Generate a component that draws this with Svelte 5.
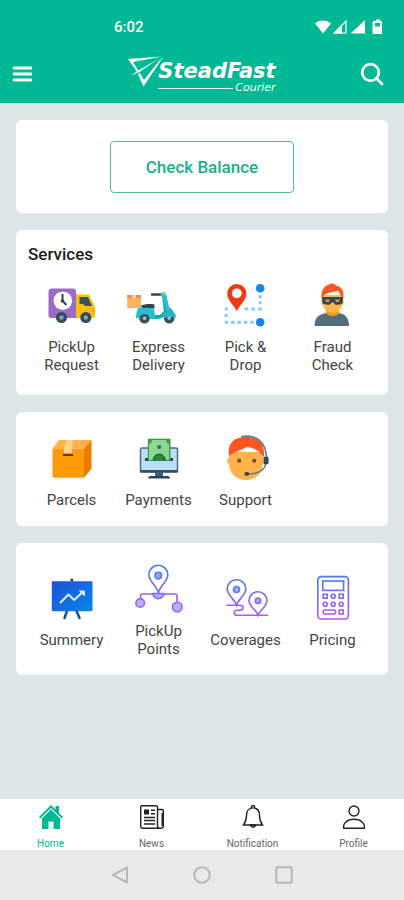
<script lang="ts">
  interface Tile {
    icon: string
    label: string
  }

  interface Group {
    title?: string
    tiles: Tile[]
  }

  const groups: Group[] = [
    {
      title: 'Services',
      tiles: [
        { icon: 'truck', label: 'PickUp Request' },
        { icon: 'scooter', label: 'Express Delivery' },
        { icon: 'route', label: 'Pick & Drop' },
        { icon: 'fraud', label: 'Fraud Check' },
      ],
    },
    {
      tiles: [
        { icon: 'parcel', label: 'Parcels' },
        { icon: 'payment', label: 'Payments' },
        { icon: 'support', label: 'Support' },
      ],
    },
    {
      tiles: [
        { icon: 'summary', label: 'Summery' },
        { icon: 'points', label: 'PickUp Points' },
        { icon: 'coverage', label: 'Coverages' },
        { icon: 'pricing', label: 'Pricing' },
      ],
    },
  ]

  const tabs = [
    { id: 'home', label: 'Home' },
    { id: 'news', label: 'News' },
    { id: 'notification', label: 'Notification' },
    { id: 'profile', label: 'Profile' },
  ]

  let active = $state('home')
</script>

{#snippet tileIcon(name: string)}
  <svg class="tile-icon" viewBox="0 0 48 48" fill="none" aria-hidden="true">
    {#if name === 'truck'}
      <path d="M3 7.5h22a3 3 0 0 1 3 3V37H3a2.5 2.500 0 0 1-2.500-2.500v-24A3 3 0 0 1 3 7.500z" fill="#9a6cc8" />
      <path d="M28 13.5h13l5 10.500 1 2v9a2 2 0 0 1-2 2H28z" fill="#fbc007" />
      <path d="M31.5 16h8.500l4 9h-7l-2-2h-3.500z" fill="#37535f" />
      <path d="M44 28h3v3h-3z" fill="#ff9d1c" />
      <circle cx="14.8" cy="19.7" r="9.3" fill="#fff" />
      <path d="M14.5 13v7l4 4" stroke="#37474f" stroke-width="2" />
      <circle cx="14.5" cy="20" r="1.8" fill="#37474f" />
      <circle cx="13.5" cy="36.5" r="5.5" fill="#324a5e" />
      <circle cx="13.5" cy="36.5" r="2.2" fill="#90a4ae" />
      <circle cx="37.8" cy="36.5" r="5.5" fill="#324a5e" />
      <circle cx="37.8" cy="36.5" r="2.2" fill="#90a4ae" />
    {:else if name === 'scooter'}
      <path d="M-7.800 14H6v13H-7.800z" fill="#ffb25c" />
      <path d="M-7.800 14H6v3H-7.800z" fill="#e08e6e" />
      <path d="M-3 14h4v3h-4z" fill="#f8cf9c" />
      <circle cx="9.5" cy="37.3" r="5.3" fill="#37535f" />
      <circle cx="9.5" cy="37.3" r="1.8" fill="#a9c3cc" />
      <circle cx="34.2" cy="37.3" r="5.3" fill="#37535f" />
      <circle cx="34.2" cy="37.3" r="1.8" fill="#a9c3cc" />
      <path d="M4 27h15l1 7h5l4-4-2-18h4l3 14c4 2 6 7 6 10H28l-3 2H15c0-6-10-6-11-1H1c0-5 1-8 3-11z" fill="#28bfd0" />
      <path d="M20 34h5l4-4-2-14 5 15-5 6h-7z" fill="#16a7b8" />
      <path d="M27.5 36c0-8 12-9 13.500 0l-3 1c-1-4-6-4-7 0z" fill="#23b2c4" />
      <path d="M5.5 25c4-2 9-2.500 14-1.500V27h-12z" fill="#37474f" />
      <path d="M17 13.500h10" stroke="#37474f" stroke-width="2.5" stroke-linecap="round" />
      <path d="M25 12.500l5-2v6h-3z" fill="#28bfd0" />
      <path d="M28.500 11h2v3h-2z" fill="#ffc83d" />
    {:else if name === 'route'}
      <path d="M4.200 26.500v3m0 3.500v3M36.700 15.700h3m-3 6h3" stroke="#8cc5ff" stroke-width="3" />
      <path d="M22.700 28h17" stroke="#8cc5ff" stroke-width="3" stroke-dasharray="3.500 3.250" />
      <path d="M2.700 41.300h29" stroke="#8cc5ff" stroke-width="3" stroke-dasharray="3.500 2.900" />
      <circle cx="38.2" cy="7.3" r="4.3" fill="#1683e8" />
      <circle cx="38.2" cy="41.3" r="4.3" fill="#1683e8" />
      <path d="M14.800 30C12 24.500 5.200 19 5.200 12.500a9.600 9.600 0 0 1 19.200 0C24.400 19 17.600 24.500 14.800 30z" fill="#f03a17" />
      <circle cx="14.8" cy="12.3" r="4.9" fill="#fff" />
    {:else if name === 'fraud'}
      <path d="M5.500 45c0-9 5-12 12-13h12c7 1 10.500 5 10.500 13z" fill="#546e7a" />
      <path d="M17 27h13v5c-2 4-11 4-13 0z" fill="#ff9a0c" />
      <path d="M13.500 14h20v5c2 0 2 5-.5 5-1 5-5 8-9.500 8S15 29 14 24c-2.500 0-2.500-5-.5-5z" fill="#ffb84d" />
      <path d="M12.800 18C11 9 16 2.500 25 2.500l2 2c6 1 8.500 6 7.200 13.500l-2-3-3-5c-5 1-11 1-15 5z" fill="#ff5722" />
      <path d="M13 16h21v3l-1 4-6 1-3.500-3-3.500 3-6-1-1-4z" fill="#37474f" />
      <path d="M16 18.500h5l-1 2.500h-3zM26 18.500h5l-1 2.500h-3z" fill="#c79a5b" />
    {:else if name === 'parcel'}
      <path d="M4.500 14.500L11 6h32.500L36 14.500z" fill="#ffb24a" />
      <path d="M4.500 14.500H36v29.300H6.500a2 2 0 0 1-2-2z" fill="#ff9a08" />
      <path d="M36 14.500L43.500 6v28.500L36 43.800z" fill="#ed7b00" />
      <path d="M18 6h7l-1 8.500v4.500h-8v-4.500z" fill="#ffd28a" />
      <path d="M15 20h10v2H15z" fill="#6b3a0d" />
    {:else if name === 'payment'}
      <path d="M20 38h8v5h-8z" fill="#455a64" />
      <path d="M13 44.500c0-2 2-2.500 4-2.500h14c3 0 4 .5 4 2.500z" fill="#2c4250" />
      <rect x="5.5" y="14" width="37" height="24" rx="1.5" fill="#bbdefb" stroke="#4b6e82" stroke-width="1.5" />
      <path d="M5 36h38v2.500H5z" fill="#37535f" />
      <path d="M10 24h4v3h-4zM35 24h3v3h-3z" fill="#2c4250" />
      <path d="M12.800 4.700h22.700V27H12.800z" fill="#3b9e4d" />
      <path d="M17 6h14c0 2 1 3.500 3 4v16H14V10c2-.5 3-2 3-4z" fill="#8fd694" />
      <circle cx="24.2" cy="13" r="2" fill="#217a38" />
      <path d="M17.500 27c0-10 13.500-10 13.500 0z" fill="#217a38" />
      <path d="M20 23h8M20 26h8" stroke="#3b9e4d" />
    {:else if name === 'support'}
      <path d="M7 18h34v11c0 10-7 17-17 17S7 39 7 30c-2.500-1-2.500-6 0-6z" fill="#ffb24d" />
      <path d="M7 22C5 9 12 3 24 3c13 0 19 6 18 20-4-4-7-9-17-10-8 4-13 5-18 9z" fill="#ff5722" />
      <path d="M19 2.800c14-3 25 4 25.500 21M44 29c-1 8-8 11-19 11" stroke="#607d8b" stroke-width="1.6" />
      <circle cx="17.2" cy="26.7" r="2" fill="#784719" />
      <circle cx="32.2" cy="26.7" r="2" fill="#784719" />
      <rect x="41.5" y="22.7" width="5" height="7.6" rx="1" fill="#37474f" />
      <rect x="22.5" y="38" width="4.5" height="3.8" rx="1.5" fill="#37474f" />
    {:else if name === 'summary'}
      <circle cx="23.8" cy="6" r="1.5" fill="#0d3c72" />
      <path d="M19 37l-2.500 7M28.500 37l3 7" stroke="#12538c" stroke-width="2.5" stroke-linecap="round" />
      <rect x="3.8" y="7.3" width="40.7" height="30" rx="1" fill="url(#board)" />
      <path d="M12 29l8.500-8.500 5.700 5.500 8.500-8" stroke="#d6f1ff" stroke-width="2" stroke-linejoin="round" />
      <path d="M31.500 17h5v5z" fill="#d6f1ff" stroke="#d6f1ff" />
    {:else if name === 'points'}
      <g stroke="url(#line)" stroke-width="1.6">
        <path d="M5.500 33v-2a2 2 0 0 1 2-2H40a2 2 0 0 1 2 2v6" />
        <path d="M18 28.500a5.300 5.300 0 0 0 10.600 0z" fill="#9db8f5" />
        <path d="M23.300 28C22 20 13.800 17 13.800 9.800a9.500 9.500 0 0 1 19 0C32.800 17 25 20 23.300 28z" fill="#fff" />
        <circle cx="23.3" cy="10.6" r="3.3" fill="#82aef8" />
        <circle cx="5.2" cy="38" r="4.3" fill="#a9b6f2" />
        <circle cx="42.2" cy="42" r="4.8" fill="#a9b6f2" />
      </g>
    {:else if name === 'coverage'}
      <g stroke="url(#line)" stroke-width="1.6" stroke-linecap="round">
        <path d="M5 31.300h13c4 0 4 5 0 5h-3c-4 0-3 5 0 5h30.500" />
        <path d="M14.500 31C13 25.500 5.200 21.500 5.200 15a9.300 9.300 0 0 1 18.600 0c0 6.500-7.800 10.500-9.300 16z" />
        <circle cx="14.5" cy="15.5" r="3" fill="#8eb5fb" />
        <path d="M36 41c-1-4.500-9-8.500-9-14.300a9 9 0 0 1 18 0C45 32.500 37.500 36.500 36 41z" />
        <circle cx="36" cy="26.7" r="2.7" fill="#b0adf8" />
      </g>
    {:else if name === 'pricing'}
      <g stroke="url(#line)" stroke-width="1.6">
        <rect x="8.8" y="2.6" width="30.6" height="42.4" rx="3.5" />
        <rect x="13.8" y="7" width="20.8" height="9.4" />
        {#each [22.3, 30.3] as y}
          {#each [16.2, 24.2, 32.2] as x}
            <rect x={x - 2} y={y - 2} width="4" height="4" rx={(x > 20 && x < 30) || y > 25 ? 2 : 0} />
          {/each}
        {/each}
        <rect x="14.2" y="36" width="12.4" height="4" rx="1.5" />
        <rect x="30.2" y="36" width="4" height="4" />
      </g>
    {/if}
  </svg>
{/snippet}

{#snippet tabIcon(id: string)}
  <svg viewBox="0 0 24 24" width="24" height="24" fill="none" stroke="currentColor" stroke-width="1.4" aria-hidden="true">
    {#if id === 'home'}
      <path d="M12 0L0 12l1.200 1.400L12 2.900l10.800 10.500L24 12l-4-4V1h-3.500v3.500z" fill="currentColor" stroke="none" />
      <path d="M12 4.500L3 13.300V24h6.500v-7.500h5V24H21V13.300z" fill="currentColor" stroke="none" />
    {:else if id === 'news'}
      <path d="M17.500 4.500H22a1.300 1.300 0 0 1 1.300 1.300V21a2.300 2.300 0 0 1-2.300 2.300H3A2.300 2.300 0 0 1 .7 21V2A1.300 1.300 0 0 1 2 .7h14.200A1.300 1.300 0 0 1 17.500 2v19a2.200 2.200 0 0 0 2 2.300" />
      <path d="M4 4.500h5v5H4z" fill="currentColor" stroke="none" />
      <path d="M11 5.200h4M11 8.800h4M4 12.500h11M4 15.500h11M4 19h11" />
      <path d="M22.500 8v13" stroke-width="2" />
    {:else if id === 'notification'}
      <path d="M10.300 3.300V2.200a1.700 1.700 0 0 1 3.400 0v1.100M12 2.900c-4.500 0-6.500 3.500-6.500 7.500 0 5-1.300 7.300-3 9.600h19c-1.700-2.300-3-4.600-3-9.600 0-4-2-7.500-6.500-7.500z" />
      <path d="M9.500 20a2.600 3 0 0 0 5 0z" />
    {:else}
      <circle cx="12" cy="6" r="5" />
      <path d="M1.700 23.300c-1-5 3.500-9 10.300-9s11.300 4 10.300 9z" />
    {/if}
  </svg>
{/snippet}

<svg class="defs" width="0" height="0" aria-hidden="true">
  <defs>
    <linearGradient id="line" gradientUnits="userSpaceOnUse" x1="0" y1="0" x2="0" y2="46">
      <stop offset="0" stop-color="#3f7df2" />
      <stop offset="1" stop-color="#bd52f0" />
    </linearGradient>
    <linearGradient id="board" x1="0" y1="0" x2="1" y2="1">
      <stop offset="0" stop-color="#1b4fdd" />
      <stop offset="1" stop-color="#0b86e6" />
    </linearGradient>
  </defs>
</svg>

<div class="screen">
  <header>
    <div class="status">
      <span>6:02</span>
      <svg viewBox="0 0 68 16" width="68" height="16" fill="#fff" aria-hidden="true">
        <path d="M1 4.500c4.500-4 11.500-4 16 0L9 14.500z" />
        <path d="M32 2v12H20.500z" fill="none" stroke="#fff" stroke-width="1.2" />
        <path d="M19 14.500l9-9v9z" />
        <path d="M51 1v13.500H36.500z" />
        <path d="M60 2h2V.5h4V2h1a1.500 1.500 0 0 1 1.500 1.500v10a1.500 1.500 0 0 1-1.500 1.500h-7a1.500 1.500 0 0 1-1.500-1.500v-10A1.500 1.500 0 0 1 60 2zm1 2v3.500h5V4z" />
      </svg>
    </div>
    <div class="appbar">
      <button type="button" aria-label="Menu">
        <svg viewBox="0 0 20 16" width="20" height="16" stroke="#fff" stroke-width="2.8" stroke-linecap="round" aria-hidden="true">
          <path d="M2 2h17M2 8h17M2 14h17" />
        </svg>
      </button>
      <div class="logo">
        <svg viewBox="0 0 36 32" width="36" height="32" fill="#fff" aria-hidden="true">
          <path d="M0 3L34 .5 5 6l6 9.500-1.500 1z" />
          <path d="M35.500.5L15.500 30.500 10 18.500l2-1.500 4 7L31 5z" />
          <path d="M32 2L10 14.500l-7 5 8-3z" opacity=".8" />
        </svg>
        <div class="wordmark">
          <span class="brand">SteadFast</span>
          <span class="sub">Courier</span>
        </div>
      </div>
      <button type="button" aria-label="Search">
        <svg viewBox="0 0 24 24" width="24" height="24" fill="none" stroke="#fff" stroke-width="2.8" stroke-linecap="round" aria-hidden="true">
          <circle cx="10.5" cy="10.5" r="8.3" />
          <path d="M16.500 16.500l5.500 5.500" />
        </svg>
      </button>
    </div>
  </header>

  <main>
    <section class="card balance">
      <button type="button">Check Balance</button>
    </section>

    {#each groups as group}
      <section class="card" class:titled={group.title}>
        {#if group.title}<h2>{group.title}</h2>{/if}
        <div class="tiles">
          {#each group.tiles as tile}
            <button type="button" class="tile">
              {@render tileIcon(tile.icon)}
              <span>{tile.label}</span>
            </button>
          {/each}
        </div>
      </section>
    {/each}
  </main>

  <nav class="tabs" aria-label="Main">
    {#each tabs as tab}
      <a href="#{tab.id}" class:active={active === tab.id} onclick={() => (active = tab.id)}>
        {@render tabIcon(tab.id)}
        <span>{tab.label}</span>
      </a>
    {/each}
  </nav>

  <div class="system">
    <button type="button" aria-label="Back">
      <svg viewBox="0 0 18 18" width="18" height="18" aria-hidden="true"><path d="M16 1.500v15L2 9z" /></svg>
    </button>
    <button type="button" aria-label="Home screen">
      <svg viewBox="0 0 18 18" width="18" height="18" aria-hidden="true"><circle cx="9" cy="9" r="7.8" /></svg>
    </button>
    <button type="button" aria-label="Recent apps">
      <svg viewBox="0 0 18 18" width="18" height="18" aria-hidden="true"><rect x="1.2" y="1.2" width="15.6" height="15.6" rx="2" /></svg>
    </button>
  </div>
</div>

<style>
  :global(body) {
    margin: 0;
    font-family: Roboto, 'Liberation Sans', sans-serif;
    background: #dfe6e8;
  }

  button {
    appearance: none;
    border: 0;
    padding: 0;
    background: transparent;
    font: inherit;
    color: inherit;
    cursor: pointer;
  }
  svg { display: block; }
  .defs { position: absolute; }

  .screen {
    display: flex;
    flex-direction: column;
    min-height: 100vh;
  }

  header {
    background: #00b894;
    color: #fff;
  }
  .status {
    display: flex;
    align-items: center;
    justify-content: space-between;
    padding: 18px 22px 10px 114px;
    font-size: 15px;
    font-weight: 500;
    line-height: 18px;
  }
  .appbar {
    display: flex;
    align-items: center;
    justify-content: space-between;
    padding: 10px 20px 11px 12px;
  }
  .logo {
    display: flex;
    align-items: flex-start;
    height: 36px;
    margin-left: 12px;
  }
  .wordmark {
    display: flex;
    flex-direction: column;
    margin-left: -6px;
    padding-top: 4px;
    font-family: 'DejaVu Sans', sans-serif;
    font-style: italic;
  }
  .brand {
    font-size: 21px;
    font-weight: 700;
    line-height: 22px;
  }
  .sub {
    display: flex;
    align-items: center;
    gap: 2px;
    font-size: 11px;
    line-height: 12px;
  }
  .sub::before {
    content: '';
    flex: 1;
    height: 1px;
    background: #fff;
  }

  main {
    flex: 1;
    display: flex;
    flex-direction: column;
    gap: 17px;
    padding: 17px 16px;
  }
  .card {
    padding: 22px 12px 17px;
    border-radius: 6px;
    background: #fff;
  }
  .titled { padding: 14px 12px 21px; }
  .balance {
    display: flex;
    justify-content: center;
    padding: 21px 12px 20px;
  }
  .balance button {
    padding: 15px 35px;
    border: 1px solid #4dbd9b;
    border-radius: 4px;
    color: #16b08b;
    font-size: 17px;
    font-weight: 500;
    line-height: 20px;
  }
  h2 {
    margin: 0 0 17px;
    color: #1c1c1c;
    font-size: 17px;
    font-weight: 500;
    line-height: 20px;
  }

  .tiles {
    display: grid;
    grid-template-columns: repeat(4, 1fr);
    align-items: center;
  }
  .tile {
    display: flex;
    flex-direction: column;
    align-items: center;
    gap: 9px;
    color: #444;
    font-size: 15px;
    line-height: 18px;
  }
  .tile span { max-width: 72px; }
  .tile-icon {
    width: 48px;
    height: 48px;
    overflow: visible;
  }

  .tabs {
    display: grid;
    grid-template-columns: repeat(4, 1fr);
    background: #fff;
  }
  .tabs a {
    display: flex;
    flex-direction: column;
    align-items: center;
    gap: 9px;
    padding-top: 6px;
    color: #222;
    font-size: 10px;
    line-height: 12px;
    text-decoration: none;
  }
  .tabs span { color: #666; }
  .tabs .active,
  .tabs .active span { color: #00b894; }

  .system {
    display: flex;
    align-items: center;
    justify-content: center;
    gap: 64px;
    height: 50px;
    background: #e9e9e9;
  }
  .system svg {
    fill: none;
    stroke: #b9b9b9;
    stroke-width: 2;
    stroke-linejoin: round;
  }
</style>
